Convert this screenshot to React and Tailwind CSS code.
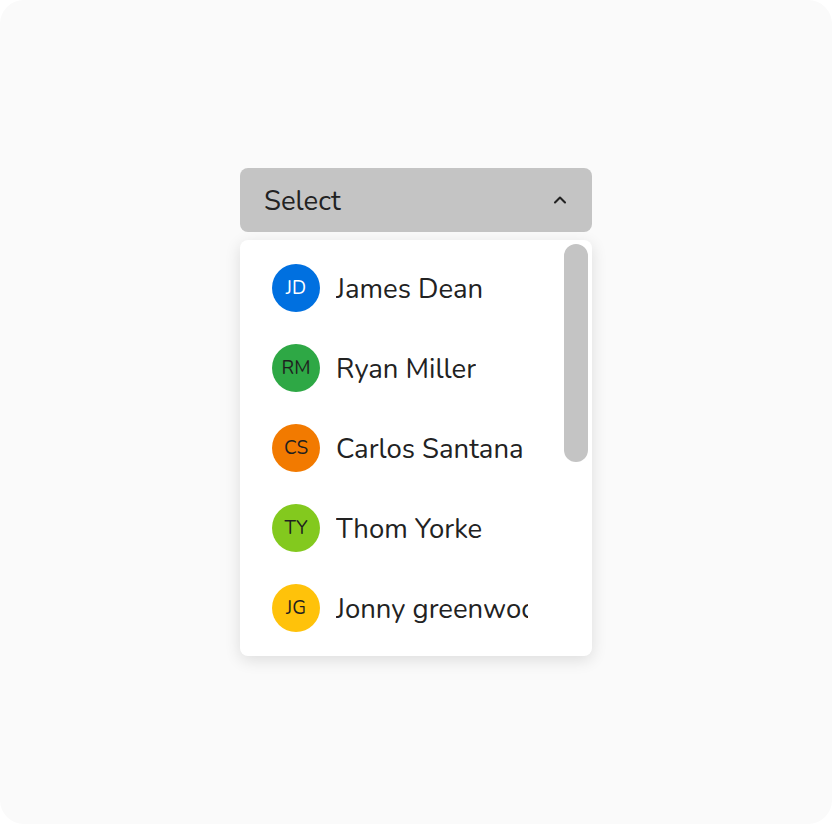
import { FiChevronUp } from 'react-icons/fi'

const people = [
  { initials: 'JD', name: 'James Dean', bg: 'bg-[#0070e0]', fg: 'text-white' },
  { initials: 'RM', name: 'Ryan Miller', bg: 'bg-[#2ea845]', fg: 'text-[#1f1f1f]' },
  { initials: 'CS', name: 'Carlos Santana', bg: 'bg-[#f27a00]', fg: 'text-[#1f1f1f]' },
  { initials: 'TY', name: 'Thom Yorke', bg: 'bg-[#83c91e]', fg: 'text-[#1f1f1f]' },
  { initials: 'JG', name: 'Jonny greenwood', bg: 'bg-[#ffc20a]', fg: 'text-[#1f1f1f]' },
]

export default function App() {
  return (
    <div className="w-[832px] h-[824px] bg-white">
      <div className="w-full h-full bg-[#fafafa] rounded-[24px] pt-[168px] font-['Nunito','Lato',sans-serif] text-[#222]">
        <div className="w-[352px] mx-auto">
          <button className="w-full h-16 rounded-lg bg-[#c4c4c4] flex items-center justify-between pl-6 pr-[22px] text-[27.5px]">
            <span className="pt-1">Select</span>
            <FiChevronUp className="w-5 h-5 text-[#222]" strokeWidth={2.5} />
          </button>

          <div className="mt-2 h-[416px] bg-white rounded-lg shadow-[0_4px_16px_rgba(0,0,0,0.12)] flex overflow-hidden">
            <ul className="flex-1 min-w-0 pt-2 pl-8 pr-8 overflow-hidden">
              {people.map((p) => (
                <li key={p.initials} className="h-20 flex items-center gap-4">
                  <div className={`w-12 h-12 shrink-0 rounded-full ${p.bg} ${p.fg} flex items-center justify-center text-[19px]`}>
                    {p.initials}
                  </div>
                  <span className="min-w-0 pt-1 text-[27.5px] whitespace-nowrap overflow-hidden">{p.name}</span>
                </li>
              ))}
            </ul>
            <div className="w-8 p-1 shrink-0">
              <div className="w-6 h-[218px] rounded-full bg-[#c4c4c4]" />
            </div>
          </div>
        </div>
      </div>
    </div>
  )
}
